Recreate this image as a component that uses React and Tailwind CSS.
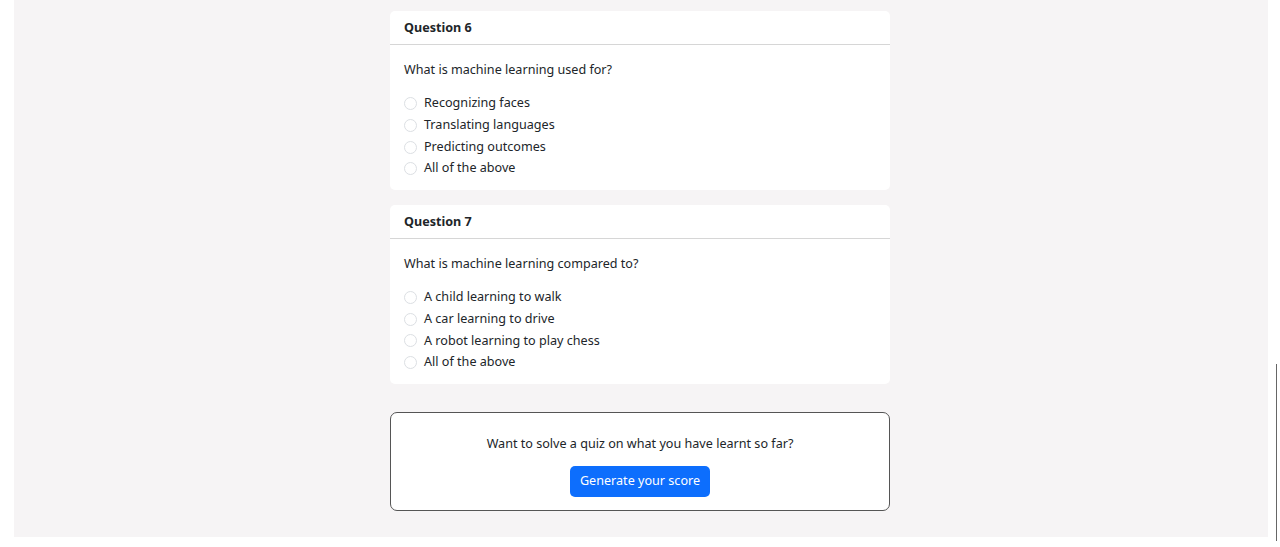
import React from 'react';

const questions = [
  {
    n: 6,
    text: 'What is machine learning used for?',
    options: ['Recognizing faces', 'Translating languages', 'Predicting outcomes', 'All of the above'],
  },
  {
    n: 7,
    text: 'What is machine learning compared to?',
    options: ['A child learning to walk', 'A car learning to drive', 'A robot learning to play chess', 'All of the above'],
  },
];

const QuestionCard = ({ q }) => (
  <div className="bg-white rounded-[5px] mb-[15px]">
    <div className="h-[34px] px-[14px] pt-[2px] flex items-center border-b border-[#d6d6d6] font-bold text-[12.6px]">
      Question {q.n}
    </div>
    <div className="px-[14px] pt-[15px] pb-[10px]">
      <p className="text-[12.6px] leading-[19px] mb-[14px]">{q.text}</p>
      <div className="flex flex-col">
        {q.options.map((opt, i) => (
          <label key={i} className="flex items-center h-[21.7px] text-[12.6px]">
            <span className="w-[13px] h-[13px] rounded-full border border-[#dcdfe3] bg-white mr-[7px]" />
            {opt}
          </label>
        ))}
      </div>
    </div>
  </div>
);

export default function App() {
  return (
    <div
      className="min-h-[547px] bg-white text-[#212529] relative"
      style={{ fontFamily: '"Noto Sans", "Open Sans", Arial, sans-serif' }}
    >
      <div className="ml-[14px] w-[1254px] h-[537px] bg-[#f6f4f5] pt-[11px]">
        <div className="ml-[376px] w-[500px]">
          {questions.map((q) => (
            <QuestionCard key={q.n} q={q} />
          ))}
          <div className="mt-[28px] h-[99px] border border-[#555] rounded-[7px] bg-white flex flex-col items-center pt-[21px]">
            <p className="text-[12.6px] leading-[19px]">Want to solve a quiz on what you have learnt so far?</p>
            <button className="mt-[13px] w-[140px] h-[31px] pt-[1px] bg-[#0d6efd] text-white text-[12.6px] rounded-[5px]">
              Generate your score
            </button>
          </div>
        </div>
      </div>
      <div className="absolute left-[1276px] top-[364px] w-[1px] h-[177px] bg-[#666]" />
    </div>
  );
}
